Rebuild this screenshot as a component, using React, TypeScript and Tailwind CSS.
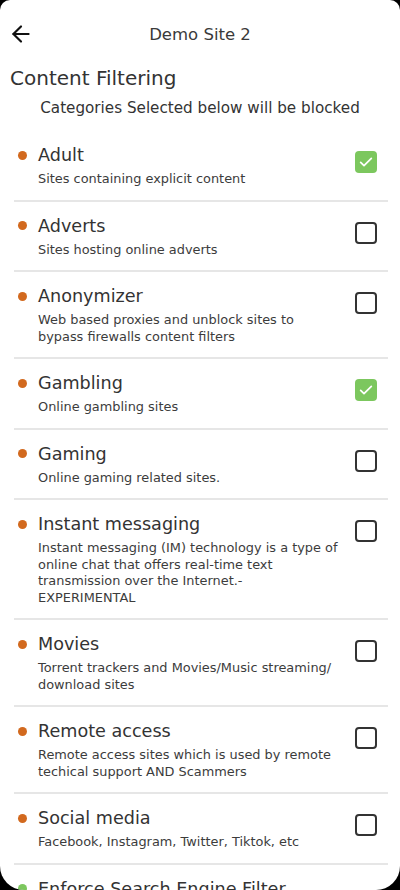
import { ArrowLeft } from 'lucide-react'

type Category = {
  name: string
  desc: string[]
  checked?: boolean
  dot?: 'orange' | 'green'
}

const CATEGORIES: Category[] = [
  { name: 'Adult', desc: ['Sites containing explicit content'], checked: true },
  { name: 'Adverts', desc: ['Sites hosting online adverts'], checked: false },
  {
    name: 'Anonymizer',
    desc: ['Web based proxies and unblock sites to', 'bypass firewalls content filters'],
    checked: false,
  },
  { name: 'Gambling', desc: ['Online gambling sites'], checked: true },
  { name: 'Gaming', desc: ['Online gaming related sites.'], checked: false },
  {
    name: 'Instant messaging',
    desc: [
      'Instant messaging (IM) technology is a type of',
      'online chat that offers real-time text',
      'transmission over the Internet.-',
      'EXPERIMENTAL',
    ],
    checked: false,
  },
  {
    name: 'Movies',
    desc: ['Torrent trackers and Movies/Music streaming/', 'download sites'],
    checked: false,
  },
  {
    name: 'Remote access',
    desc: ['Remote access sites which is used by remote', 'techical support AND Scammers'],
    checked: false,
  },
  { name: 'Social media', desc: ['Facebook, Instagram, Twitter, Tiktok, etc'], checked: false },
  { name: 'Enforce Search Engine Filter', desc: [], dot: 'green' },
]

function Checkbox({ checked }: { checked: boolean }) {
  if (checked) {
    return (
      <div className="w-[22px] h-[22px] rounded-[4px] bg-[#7cc75e] flex items-center justify-center">
        <svg width="16" height="16" viewBox="0 0 24 24" fill="none" stroke="white" strokeWidth="2.6" strokeLinecap="round" strokeLinejoin="round">
          <path d="M4 12.5l5 5L20 6.5" />
        </svg>
      </div>
    )
  }
  return <div className="w-[22px] h-[22px] rounded-[4px] border-2 border-[#333333]" />
}

export default function App() {
  return (
    <div className="w-[400px] h-[890px] bg-black" style={{ fontFamily: '"DejaVu Sans", "Open Sans", sans-serif' }}>
      <div className="w-full h-full bg-white rounded-t-[10px] rounded-b-[24px] overflow-hidden text-[#333333]">
        {/* Header */}
        <div className="relative h-[66px] pt-[4px] flex items-center justify-center">
          <ArrowLeft className="absolute left-[8px] top-[21px] w-[26px] h-[26px] text-[#111111]" strokeWidth={2} />
          <span className="text-[16.5px] text-[#3a3a3a]">Demo Site 2</span>
        </div>

        <h1 className="px-[10px] text-[20px] leading-[24px] text-[#333333]">Content Filtering</h1>
        <p className="mt-[8px] text-center text-[15.2px] leading-[20px] text-[#333333]">
          Categories Selected below will be blocked
        </p>

        {/* Category list */}
        <div className="mt-[13px] ml-[14px] w-[374px]">
          {CATEGORIES.map((c, i) => (
            <div key={c.name} className={`flex items-start ${i > 0 ? 'border-t-2 border-[#e6e6e6]' : ''}`}>
              <div className="flex-1 pt-[13px] pb-[12px]">
                <div className="flex items-center">
                  <span
                    className={`w-[9px] h-[9px] rounded-full ml-[4px] mr-[11px] ${
                      c.dot === 'green' ? 'bg-[#7cc75e]' : 'bg-[#d2691e]'
                    }`}
                  />
                  <span className="text-[17.6px] leading-[22px] text-[#333333]">{c.name}</span>
                </div>
                {c.desc.length > 0 && (
                  <div className="mt-[5px] pl-[24px] text-[12.9px] leading-[16.5px] text-[#3c3c3c]">
                    {c.desc.map((line) => (
                      <div key={line}>{line}</div>
                    ))}
                  </div>
                )}
              </div>
              {c.checked !== undefined && (
                <div className="pt-[20px] pr-[11px]">
                  <Checkbox checked={c.checked} />
                </div>
              )}
            </div>
          ))}
        </div>
      </div>
    </div>
  )
}
